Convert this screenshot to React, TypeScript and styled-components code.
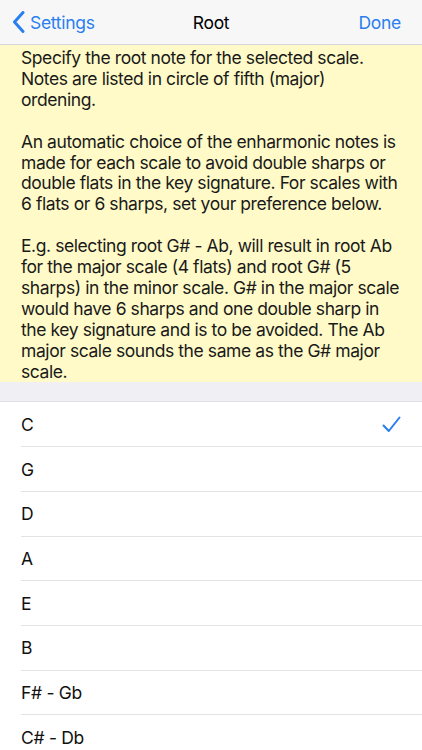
import React from 'react';
import styled, { createGlobalStyle } from 'styled-components';

const GlobalStyle = createGlobalStyle`
  html, body {
    margin: 0;
    padding: 0;
    background: #ffffff;
  }
  body {
    font-family: Inter, "Liberation Sans", Arial, sans-serif;
    -webkit-font-smoothing: antialiased;
  }
`;

const Screen = styled.div`
  width: 422px;
  height: 750px;
  overflow: hidden;
  display: flex;
  flex-direction: column;
  background: #ffffff;
`;

const NavBar = styled.div`
  height: 45px;
  flex-shrink: 0;
  display: grid;
  grid-template-columns: 1fr auto 1fr;
  align-items: center;
  background: #f7f7f8;
  border-bottom: 1px solid #d6d6da;
  box-sizing: border-box;
  font-size: 17.5px;
  letter-spacing: -0.3px;
`;

const BackButton = styled.div`
  display: flex;
  align-items: center;
  gap: 5px;
  padding-left: 12px;
  color: #2a7ff0;
`;

const Title = styled.div`
  color: #000000;
`;

const DoneButton = styled.div`
  justify-self: end;
  padding-right: 21px;
  color: #2a7ff0;
`;

const InfoBox = styled.div`
  background: #fffac8;
  padding: 3px 21px 0 21px;
  font-size: 17.5px;
  line-height: 20.9px;
  letter-spacing: -0.42px;
  color: #1a1a1a;
  flex-shrink: 0;
`;

const Para = styled.p`
  margin: 0 0 20.9px 0;

  &:last-child {
    margin-bottom: 0;
  }
`;

const Spacer = styled.div`
  height: 19px;
  background: #efeff4;
  border-bottom: 1px solid #e1e1e5;
  flex-shrink: 0;
`;

const List = styled.div`
  display: flex;
  flex-direction: column;
`;

const Row = styled.div`
  height: 44.7px;
  flex-shrink: 0;
  display: flex;
  align-items: center;
  justify-content: space-between;
  margin-left: 21px;
  padding-right: 21px;
  border-bottom: 1px solid #e3e3e6;
  box-sizing: border-box;
  font-size: 17.5px;
  letter-spacing: -0.3px;
  color: #111111;
`;

const notes = ['C', 'G', 'D', 'A', 'E', 'B', 'F# - Gb', 'C# - Db'];

const Chevron = () => (
  <svg width="13" height="22" viewBox="0 0 13 22" fill="none">
    <path d="M11 1.5 L2.5 11 L11 20.5" stroke="#2a7ff0" strokeWidth="3" strokeLinecap="round" strokeLinejoin="round" />
  </svg>
);

const Check = () => (
  <svg width="19" height="17" viewBox="0 0 19 17" fill="none">
    <path d="M1.5 9.5 L6.8 15 L17.5 1.5" stroke="#2a7ff0" strokeWidth="2" strokeLinecap="round" strokeLinejoin="round" />
  </svg>
);

export default function App() {
  return (
    <Screen>
      <GlobalStyle />
      <NavBar>
        <BackButton>
          <Chevron />
          <span>Settings</span>
        </BackButton>
        <Title>Root</Title>
        <DoneButton>Done</DoneButton>
      </NavBar>

      <InfoBox>
        <Para>
          Specify the root note for the selected scale. Notes are listed in circle of fifth (major)
          ordening.
        </Para>
        <Para>
          An automatic choice of the enharmonic notes is made for each scale to avoid double sharps or
          double flats in the key signature. For scales with 6 flats or 6 sharps, set your preference below.
        </Para>
        <Para>
          E.g. selecting root G# - Ab, will result in root Ab for the major scale (4 flats) and root G# (5
          sharps) in the minor scale. G# in the major scale would have 6 sharps and one double sharp in
          the key signature and is to be avoided. The Ab major scale sounds the same as the G# major
          scale.
        </Para>
      </InfoBox>

      <Spacer />

      <List>
        {notes.map((n, i) => (
          <Row key={n}>
            <span>{n}</span>
            {i === 0 && <Check />}
          </Row>
        ))}
      </List>
    </Screen>
  );
}
